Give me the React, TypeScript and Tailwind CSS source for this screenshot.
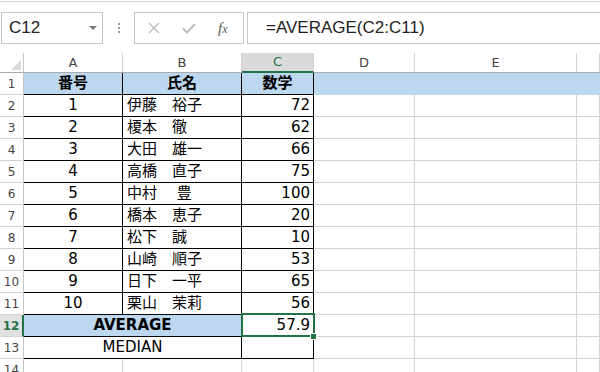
import clsx from "clsx"

const rows: [number, string, number][] = [
  [1, "伊藤　裕子", 72],
  [2, "榎本　徹", 62],
  [3, "大田　雄一", 66],
  [4, "高橋　直子", 75],
  [5, "中村　 豊", 100],
  [6, "橋本　恵子", 20],
  [7, "松下　誠", 10],
  [8, "山崎　順子", 53],
  [9, "日下　一平", 65],
  [10, "栗山　茉莉", 56],
]

const grid = "border-[#d4d4d4]"
const line = "border-black"

function Cell({ w, className, children }: { w: string; className?: string; children?: React.ReactNode }) {
  return (
    <div className={clsx("h-full shrink-0 border-r border-b flex items-center text-[15px] text-black", w, className)}>
      {children}
    </div>
  )
}

function RowHead({ n, active }: { n: number; active?: boolean }) {
  return (
    <div
      className={clsx(
        "w-[24px] h-full shrink-0 flex items-center justify-center border-b border-[#d4d4d4] text-[12px]",
        active
          ? "bg-[#e1e1e1] border-r-2 border-r-[#217346] text-[#217346] font-bold"
          : "bg-white border-r border-r-[#c6c6c6] text-[#444]"
      )}
    >
      {n}
    </div>
  )
}

function FormulaBar() {
  return (
    <div className="h-[52px] mt-px border-t border-[#d4d4d4] pt-[10px] flex items-start">
      <div className="ml-px w-[102px] h-[32px] border border-[#c6c6c6] flex items-center pl-[7px] pr-[5px] text-[17px] text-[#222] font-['Liberation_Sans',sans-serif]">
        <span className="flex-1">C12</span>
        <span className="w-0 h-0 border-l-[4px] border-r-[4px] border-t-[4px] border-l-transparent border-r-transparent border-t-[#777]" />
      </div>
      <div className="w-[31px] h-[32px] flex flex-col items-center justify-center gap-[2px]">
        <span className="w-[2px] h-[2px] bg-[#999]" />
        <span className="w-[2px] h-[2px] bg-[#999]" />
        <span className="w-[2px] h-[2px] bg-[#999]" />
      </div>
      <div className="w-[110px] h-[32px] border border-[#c6c6c6] flex items-center">
        <svg width="12" height="12" viewBox="0 0 12 12" className="ml-[13px]">
          <path d="M1 1L11 11M11 1L1 11" stroke="#bdbdbd" strokeWidth="1.4" fill="none" />
        </svg>
        <svg width="14" height="11" viewBox="0 0 14 11" className="ml-[22px]">
          <path d="M1 5.5L5 9.5L13 1" stroke="#bdbdbd" strokeWidth="2" fill="none" />
        </svg>
        <span className="ml-[22px] text-[15px] italic text-[#555] font-['Liberation_Serif',serif] leading-none">
          f<span className="text-[12px]">x</span>
        </span>
      </div>
      <div className="ml-[3px] flex-1 h-[32px] border-y border-l border-[#c6c6c6] flex items-center pl-[18px] text-[17px] text-[#222] font-['Liberation_Sans',sans-serif]">
        =AVERAGE(C2:C11)
      </div>
    </div>
  )
}

function ColumnHeaders() {
  const cols: [string, string][] = [
    ["A", "w-[99px]"],
    ["B", "w-[119px]"],
    ["C", "w-[72px]"],
    ["D", "w-[101px]"],
    ["E", "w-[162px]"],
    ["", "flex-1"],
  ]
  return (
    <div className="flex h-[20px]">
      <div className="w-[24px] h-full shrink-0 border-r border-b border-r-[#c6c6c6] border-b-[#ababab] flex items-end justify-end pr-[2px] pb-[2px]">
        <svg width="10" height="10" viewBox="0 0 10 10">
          <path d="M10 0L10 10L0 10Z" fill="#dadada" />
        </svg>
      </div>
      {cols.map(([c, w]) => (
        <div
          key={c || "f"}
          className={clsx(
            "h-full shrink-0 flex items-center justify-center border-r border-r-[#d4d4d4] text-[13px]",
            w,
            c === "C"
              ? "bg-[#dadada] border-b-2 border-b-[#217346] text-[#217346]"
              : "bg-white border-b border-b-[#ababab] text-[#444]"
          )}
        >
          {c}
        </div>
      ))}
    </div>
  )
}

export default function App() {
  return (
    <div className="w-[600px] h-[372px] overflow-hidden bg-white font-['DejaVu_Sans','Noto_Sans_CJK_JP',sans-serif]">
      <FormulaBar />
      <ColumnHeaders />

      <div className="flex h-[22px]">
        <RowHead n={1} />
        <Cell w="w-[99px]" className={clsx(line, "bg-[#bdd7ee] justify-center font-bold")}>番号</Cell>
        <Cell w="w-[119px]" className={clsx(line, "bg-[#bdd7ee] justify-center font-bold")}>氏名</Cell>
        <Cell w="w-[72px]" className={clsx(line, "bg-[#bdd7ee] justify-center font-bold")}>数学</Cell>
        <Cell w="w-[101px]" className="bg-[#bdd7ee] border-[#bdd7ee]" />
        <Cell w="w-[162px]" className="bg-[#bdd7ee] border-[#bdd7ee]" />
        <Cell w="flex-1" className="bg-[#bdd7ee] border-[#bdd7ee]" />
      </div>

      {rows.map(([no, name, score], i) => (
        <div key={no} className="flex h-[22px]">
          <RowHead n={i + 2} />
          <Cell w="w-[99px]" className={clsx(line, "justify-center")}>{no}</Cell>
          <Cell w="w-[119px]" className={clsx(line, "pl-[4px]")}>{name}</Cell>
          <Cell w="w-[72px]" className={clsx(line, "justify-end pr-[3px]")}>{score}</Cell>
          <Cell w="w-[101px]" className={grid} />
          <Cell w="w-[162px]" className={grid} />
          <Cell w="flex-1" className={grid} />
        </div>
      ))}

      <div className="flex h-[22px]">
        <RowHead n={12} active />
        <Cell w="w-[218px]" className={clsx(line, "bg-[#bdd7ee] justify-center font-bold")}>AVERAGE</Cell>
        <Cell w="w-[72px]" className={clsx(line, "justify-end pr-[3px] relative")}>
          57.9
          <span className="absolute -top-[2px] -left-[1px] -right-[2px] -bottom-px border-2 border-[#217346]" />
          <span className="absolute -right-[4px] -bottom-[4px] w-[7px] h-[7px] bg-[#217346] border border-white" />
        </Cell>
        <Cell w="w-[101px]" className={grid} />
        <Cell w="w-[162px]" className={grid} />
        <Cell w="flex-1" className={grid} />
      </div>

      <div className="flex h-[22px]">
        <RowHead n={13} />
        <Cell w="w-[218px]" className={clsx(line, "justify-center")}>MEDIAN</Cell>
        <Cell w="w-[72px]" className={line} />
        <Cell w="w-[101px]" className={grid} />
        <Cell w="w-[162px]" className={grid} />
        <Cell w="flex-1" className={grid} />
      </div>

      <div className="flex h-[22px]">
        <RowHead n={14} />
        <Cell w="w-[99px]" className={grid} />
        <Cell w="w-[119px]" className={grid} />
        <Cell w="w-[72px]" className={grid} />
        <Cell w="w-[101px]" className={grid} />
        <Cell w="w-[162px]" className={grid} />
        <Cell w="flex-1" className={grid} />
      </div>
    </div>
  )
}
